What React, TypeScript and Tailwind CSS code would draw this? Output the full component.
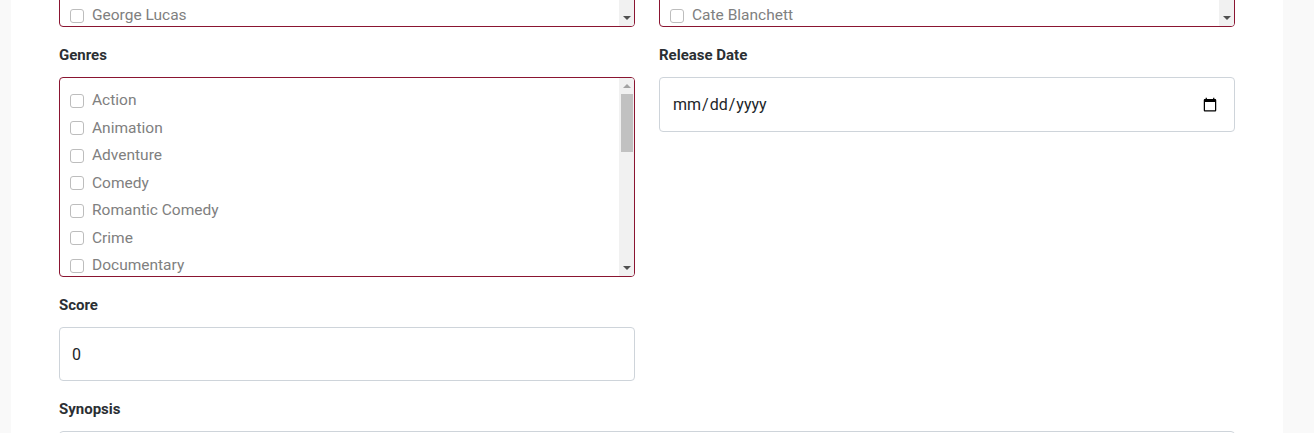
const directors = [
  "Steven Spielberg",
  "Christopher Nolan",
  "Martin Scorsese",
  "Quentin Tarantino",
  "James Cameron",
  "Ridley Scott",
  "George Lucas",
  "Peter Jackson",
];

const actors = [
  "Tom Hanks",
  "Meryl Streep",
  "Leonardo DiCaprio",
  "Natalie Portman",
  "Denzel Washington",
  "Morgan Freeman",
  "Cate Blanchett",
  "Brad Pitt",
];

const genres = [
  "Action",
  "Animation",
  "Adventure",
  "Comedy",
  "Romantic Comedy",
  "Crime",
  "Documentary",
  "Drama",
  "Fantasy",
];

function Scrollbar({ thumb }: { thumb: boolean }) {
  return (
    <div className="flex w-[15px] shrink-0 flex-col items-center bg-[#f1f1f1]">
      <div className="flex h-[16px] items-center justify-center">
        <span className="h-0 w-0 border-x-[4px] border-b-[4px] border-x-transparent border-b-[#a3a3a3]" />
      </div>
      {thumb ? <div className="h-[58px] w-[12px] bg-[#c1c1c1]" /> : null}
      <div className="flex-1" />
      <div className="flex h-[16px] items-center justify-center">
        <span className="h-0 w-0 border-x-[4px] border-t-[4px] border-x-transparent border-t-[#505050]" />
      </div>
    </div>
  );
}

function CheckList({ items, thumb }: { items: string[]; thumb: boolean }) {
  return (
    <div className="flex h-[200px] overflow-hidden rounded-[4px] border border-[#8a1531] bg-white">
      <ul className="flex-1 pl-[10px] pt-[9px]">
        {items.map((item) => (
          <li key={item} className="flex h-[27.5px] items-center gap-[8px]">
            <span className="inline-block h-[14px] w-[14px] rounded-[3px] border border-[#bdbdbd] bg-white" />
            <span className="text-[15.5px] text-[#808080]">{item}</span>
          </li>
        ))}
      </ul>
      <Scrollbar thumb={thumb} />
    </div>
  );
}

function Label({ children }: { children: React.ReactNode }) {
  return (
    <label className="mb-[11px] block pt-[2px] text-[15px] leading-[21px] font-bold text-[#2b2f33]">
      {children}
    </label>
  );
}

export default function App() {
  return (
    <div
      className="h-[433px] overflow-hidden bg-[#f9f9f9]"
      style={{ fontFamily: "Roboto, 'Noto Sans', sans-serif" }}
    >
      <div className="ml-[11px] min-h-[433px] w-[1272px] bg-white px-[48px]">
        <div className="-mt-[173px] grid grid-cols-2 items-start gap-x-[24px] gap-y-[16px]">
          <div>
            <CheckList items={directors} thumb />
          </div>
          <div>
            <CheckList items={actors} thumb />
          </div>

          <div>
            <Label>Genres</Label>
            <CheckList items={genres} thumb />
          </div>
          <div>
            <Label>Release Date</Label>
            <input
              type="date"
              className="h-[55px] w-full rounded-[4px] border border-[#ced4da] bg-white pl-[12px] pr-[14px] text-[16px] text-[#212529]"
            />
          </div>

          <div>
            <Label>Score</Label>
            <input
              type="number"
              defaultValue={0}
              className="h-[54px] w-full rounded-[4px] border border-[#ced4da] bg-white px-[12px] text-[16px] text-[#212529] [appearance:textfield]"
            />
          </div>
          <div />

          <div className="col-span-2">
            <Label>Synopsis</Label>
            <textarea className="h-[120px] w-full rounded-[4px] border border-[#ced4da] bg-white px-[12px] py-[8px]" />
          </div>
        </div>
      </div>
    </div>
  );
}
